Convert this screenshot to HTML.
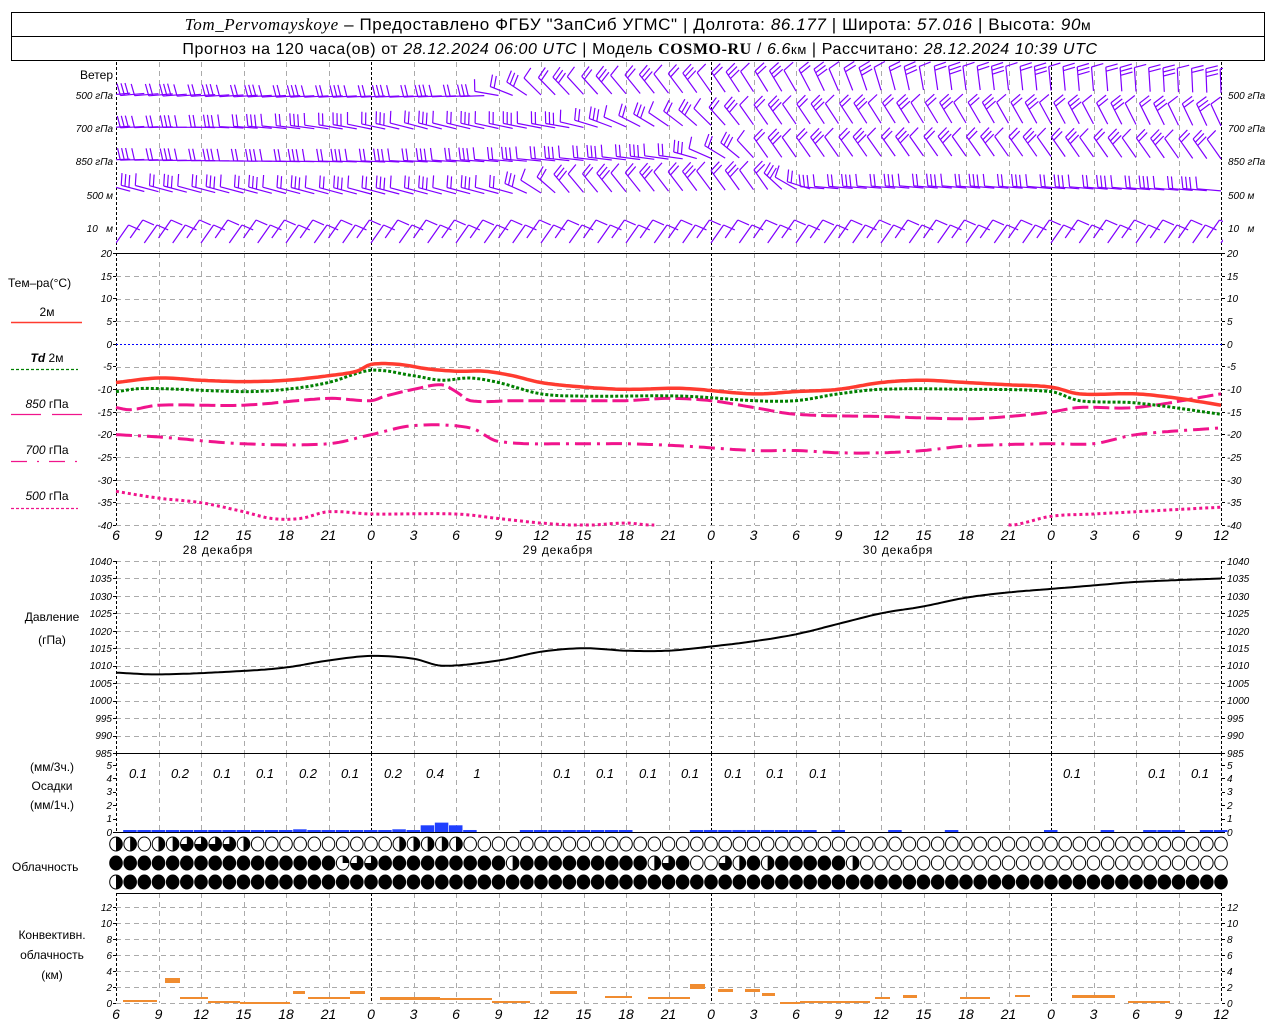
<!DOCTYPE html>
<html><head><meta charset="utf-8"><style>
html,body{margin:0;padding:0;background:#fff;}
svg{display:block;font-family:"Liberation Sans",sans-serif;}
.n{font-family:"Liberation Sans",sans-serif;font-style:italic;font-size:10px;fill:#000}
.t{font-family:"Liberation Sans",sans-serif;font-size:12px;fill:#000}
.h{font-family:"Liberation Sans",sans-serif;font-style:italic;font-size:14px;fill:#000}
.p{font-family:"Liberation Sans",sans-serif;font-style:italic;font-size:13px;fill:#000}
</style></head><body>
<svg id="s" width="1280" height="1024" viewBox="0 0 1280 1024" xmlns="http://www.w3.org/2000/svg">
<defs><clipPath id="wc"><rect x="116" y="60" width="1107" height="192"/></clipPath></defs>
<rect width="1280" height="1024" fill="#fff"/>
<g id="grid"></g>
<g id="data"></g>
<!-- header -->
<rect x="11.5" y="12.5" width="1253" height="48" fill="none" stroke="#000"/>
<line x1="11" y1="36.5" x2="1265" y2="36.5" stroke="#000"/>
<text x="638" y="30" text-anchor="middle" font-size="17" font-family="Liberation Sans, sans-serif" letter-spacing="0.6"><tspan font-family="Liberation Serif, serif" font-style="italic">Tom_Pervomayskoye</tspan> – Предоставлено ФГБУ "ЗапСиб УГМС" | Долгота: <tspan font-style="italic">86.177</tspan> | Широта: <tspan font-style="italic">57.016</tspan> | Высота: <tspan font-style="italic">90</tspan><tspan font-size="14">м</tspan></text>
<text x="640" y="54" text-anchor="middle" font-size="16" font-family="Liberation Sans, sans-serif" letter-spacing="0.6">Прогноз на 120 часа(ов) от <tspan font-style="italic">28.12.2024 06:00 UTC</tspan> | Модель <tspan font-family="Liberation Serif, serif" font-weight="bold">COSMO-RU</tspan> / <tspan font-style="italic">6.6</tspan><tspan font-size="13">км</tspan> | Рассчитано: <tspan font-style="italic">28.12.2024 10:39 UTC</tspan></text>

<!-- wind labels -->
<text class="t" x="113" y="79" text-anchor="end">Ветер</text>
<text class="n" x="113" y="99" text-anchor="end">500 гПа</text>
<text class="n" x="113" y="132" text-anchor="end">700 гПа</text>
<text class="n" x="113" y="165" text-anchor="end">850 гПа</text>
<text class="n" x="113" y="199" text-anchor="end">500 м</text>
<text class="n" x="113" y="232" text-anchor="end">10&#160;&#160;&#160;м</text>
<text class="n" x="1228" y="99">500 гПа</text>
<text class="n" x="1228" y="132">700 гПа</text>
<text class="n" x="1228" y="165">850 гПа</text>
<text class="n" x="1228" y="199">500 м</text>
<text class="n" x="1228" y="232">10&#160;&#160;&#160;м</text>

<!-- temp labels -->
<text class="t" x="8" y="287">Тем–ра(°C)</text>
<text class="t" x="47" y="316" text-anchor="middle" font-size="11">2м</text>
<line x1="11" y1="322.5" x2="82" y2="322.5" stroke="#ff3b30" stroke-width="1.5"/>
<text class="t" x="47" y="362" text-anchor="middle" font-size="11"><tspan font-style="italic" font-weight="bold">Td</tspan>  2м</text>
<line x1="11" y1="369.5" x2="78" y2="369.5" stroke="#008000" stroke-width="1.2" stroke-dasharray="3,2"/>
<text class="t" x="47" y="408" text-anchor="middle" font-size="11"><tspan font-style="italic">850</tspan> гПа</text>
<line x1="11" y1="414.5" x2="82" y2="414.5" stroke="#f0148c" stroke-width="1.2" stroke-dasharray="30,11"/>
<text class="t" x="47" y="454" text-anchor="middle" font-size="11"><tspan font-style="italic">700</tspan> гПа</text>
<line x1="11" y1="461.5" x2="78" y2="461.5" stroke="#f0148c" stroke-width="1.2" stroke-dasharray="16,10,2,10"/>
<text class="t" x="47" y="500" text-anchor="middle" font-size="11"><tspan font-style="italic">500</tspan> гПа</text>
<line x1="11" y1="508.5" x2="78" y2="508.5" stroke="#f0148c" stroke-width="1.2" stroke-dasharray="3,2"/>

<text class="t" x="52" y="621" text-anchor="middle">Давление</text>
<text class="t" x="52" y="644" text-anchor="middle">(гПа)</text>
<text class="t" x="52" y="771" text-anchor="middle">(мм/3ч.)</text>
<text class="t" x="52" y="790" text-anchor="middle">Осадки</text>
<text class="t" x="52" y="809" text-anchor="middle">(мм/1ч.)</text>
<text class="t" x="12" y="871">Облачность</text>
<text class="t" x="52" y="939" text-anchor="middle">Конвективн.</text>
<text class="t" x="52" y="959" text-anchor="middle">облачность</text>
<text class="t" x="52" y="979" text-anchor="middle">(км)</text>

<g class="n" text-anchor="end">
<text x="112" y="257">20</text><text x="112" y="280">15</text><text x="112" y="302">10</text><text x="112" y="325">5</text><text x="112" y="348">0</text><text x="112" y="370">-5</text><text x="112" y="393">-10</text><text x="112" y="416">-15</text><text x="112" y="438">-20</text><text x="112" y="461">-25</text><text x="112" y="484">-30</text><text x="112" y="506">-35</text><text x="112" y="529">-40</text>
<text x="112" y="565">1040</text><text x="112" y="582">1035</text><text x="112" y="600">1030</text><text x="112" y="617">1025</text><text x="112" y="635">1020</text><text x="112" y="652">1015</text><text x="112" y="669">1010</text><text x="112" y="687">1005</text><text x="112" y="704">1000</text><text x="112" y="722">995</text><text x="112" y="739">990</text><text x="112" y="757">985</text>
<text x="112" y="769">5</text><text x="112" y="782">4</text><text x="112" y="795">3</text><text x="112" y="809">2</text><text x="112" y="822">1</text><text x="112" y="836">0</text>
<text x="112" y="911">12</text><text x="112" y="927">10</text><text x="112" y="943">8</text><text x="112" y="959">6</text><text x="112" y="975">4</text><text x="112" y="991">2</text><text x="112" y="1007">0</text>
</g>
<g class="n">
<text x="1227" y="257">20</text><text x="1227" y="280">15</text><text x="1227" y="302">10</text><text x="1227" y="325">5</text><text x="1227" y="348">0</text><text x="1227" y="370">-5</text><text x="1227" y="393">-10</text><text x="1227" y="416">-15</text><text x="1227" y="438">-20</text><text x="1227" y="461">-25</text><text x="1227" y="484">-30</text><text x="1227" y="506">-35</text><text x="1227" y="529">-40</text>
<text x="1227" y="565">1040</text><text x="1227" y="582">1035</text><text x="1227" y="600">1030</text><text x="1227" y="617">1025</text><text x="1227" y="635">1020</text><text x="1227" y="652">1015</text><text x="1227" y="669">1010</text><text x="1227" y="687">1005</text><text x="1227" y="704">1000</text><text x="1227" y="722">995</text><text x="1227" y="739">990</text><text x="1227" y="757">985</text>
<text x="1227" y="769">5</text><text x="1227" y="782">4</text><text x="1227" y="795">3</text><text x="1227" y="809">2</text><text x="1227" y="822">1</text><text x="1227" y="836">0</text>
<text x="1227" y="911">12</text><text x="1227" y="927">10</text><text x="1227" y="943">8</text><text x="1227" y="959">6</text><text x="1227" y="975">4</text><text x="1227" y="991">2</text><text x="1227" y="1007">0</text>
</g>

<g class="h" text-anchor="middle">
<text x="116" y="540">6</text><text x="158.5" y="540">9</text><text x="201" y="540">12</text><text x="243.5" y="540">15</text><text x="286" y="540">18</text><text x="328.5" y="540">21</text><text x="371" y="540">0</text><text x="413.5" y="540">3</text><text x="456" y="540">6</text><text x="498.5" y="540">9</text><text x="541" y="540">12</text><text x="583.5" y="540">15</text><text x="626" y="540">18</text><text x="668.5" y="540">21</text><text x="711" y="540">0</text><text x="753.5" y="540">3</text><text x="796" y="540">6</text><text x="838.5" y="540">9</text><text x="881" y="540">12</text><text x="923.5" y="540">15</text><text x="966" y="540">18</text><text x="1008.5" y="540">21</text><text x="1051" y="540">0</text><text x="1093.5" y="540">3</text><text x="1136" y="540">6</text><text x="1178.5" y="540">9</text><text x="1221" y="540">12</text>
<text x="116" y="1019">6</text><text x="158.5" y="1019">9</text><text x="201" y="1019">12</text><text x="243.5" y="1019">15</text><text x="286" y="1019">18</text><text x="328.5" y="1019">21</text><text x="371" y="1019">0</text><text x="413.5" y="1019">3</text><text x="456" y="1019">6</text><text x="498.5" y="1019">9</text><text x="541" y="1019">12</text><text x="583.5" y="1019">15</text><text x="626" y="1019">18</text><text x="668.5" y="1019">21</text><text x="711" y="1019">0</text><text x="753.5" y="1019">3</text><text x="796" y="1019">6</text><text x="838.5" y="1019">9</text><text x="881" y="1019">12</text><text x="923.5" y="1019">15</text><text x="966" y="1019">18</text><text x="1008.5" y="1019">21</text><text x="1051" y="1019">0</text><text x="1093.5" y="1019">3</text><text x="1136" y="1019">6</text><text x="1178.5" y="1019">9</text><text x="1221" y="1019">12</text>
</g>
<g class="t" text-anchor="middle" letter-spacing="0.8">
<text x="218" y="554">28 декабря</text><text x="558" y="554">29 декабря</text><text x="898" y="554">30 декабря</text>
</g>
<g class="p" text-anchor="middle">
<text x="138" y="778">0.1</text><text x="180" y="778">0.2</text><text x="222" y="778">0.1</text><text x="265" y="778">0.1</text><text x="308" y="778">0.2</text><text x="350" y="778">0.1</text><text x="393" y="778">0.2</text><text x="435" y="778">0.4</text><text x="477" y="778">1</text>
<text x="562" y="778">0.1</text><text x="605" y="778">0.1</text><text x="648" y="778">0.1</text><text x="690" y="778">0.1</text><text x="733" y="778">0.1</text><text x="775" y="778">0.1</text><text x="818" y="778">0.1</text>
<text x="1072" y="778">0.1</text><text x="1157" y="778">0.1</text><text x="1200" y="778">0.1</text>
</g>
</svg>
<script>
(function(){
var NS="http://www.w3.org/2000/svg";
var G=document.getElementById('grid'),D=document.getElementById('data');
function el(p,n,a){var e=document.createElementNS(NS,n);for(var k in a)e.setAttribute(k,a[k]);p.appendChild(e);return e;}
function X(h){return 116+h*14.1667;}
function ip(k,h){if(h<=k[0][0])return k[0][1];var n=k.length;for(var i=1;i<n;i++){if(h<=k[i][0]){var a=k[i-1],b=k[i],t=(h-a[0])/(b[0]-a[0]);
 var p0=i>1?k[i-2]:a,p3=i<n-1?k[i+1]:b;
 var m1=(b[1]-p0[1])/((b[0]-p0[0])||1)*(b[0]-a[0]),m2=(p3[1]-a[1])/((p3[0]-a[0])||1)*(b[0]-a[0]);
 var t2=t*t,t3=t2*t;return (2*t3-3*t2+1)*a[1]+(t3-2*t2+t)*m1+(-2*t3+3*t2)*b[1]+(t3-t2)*m2;}}return k[n-1][1];}
function ipl(k,h){if(h<=k[0][0])return k[0][1];for(var i=1;i<k.length;i++){if(h<=k[i][0]){var a=k[i-1],b=k[i],t=(h-a[0])/(b[0]-a[0]);return a[1]+(b[1]-a[1])*t;}}return k[k.length-1][1];}
function hl(y,x1,x2,st){el(G,'line',{x1:x1,x2:x2,y1:y+.5,y2:y+.5,stroke:st||'#aaa','stroke-dasharray':st?'':'5,4'});}
for(var v=15;v>=-40;v-=5){var y=Math.round(344-v*4.533);if(v!=0)hl(y,116,1222);}
for(var p=1040;p>985;p-=5){hl(Math.round(561+(1040-p)*3.49),116,1222);}
for(var c=2;c<=12;c+=2){hl(1003-c*8,116,1222);}
hl(1003,116,1222);
function vseg(x,y1,y2,day){el(G,'line',{x1:x+.5,x2:x+.5,y1:y1,y2:y2,stroke:day?'#000':'#aaa','stroke-dasharray':day?'3,2':'5,4'});}
for(var h=0;h<=78;h+=3){var x=Math.round(X(h)),day=(h==18||h==42||h==66||h==0||h==78);
 vseg(x,62,252,day);vseg(x,253,525,day);vseg(x,561,753,day);vseg(x,753,832,day);vseg(x,893,1003,day);}
[[253],[753],[832],[893]].forEach(function(a){el(G,'line',{x1:116,x2:1222,y1:a[0]+.5,y2:a[0]+.5,stroke:'#000'});});
el(G,'line',{x1:116,x2:1222,y1:344.5,y2:344.5,stroke:'#0000ff','stroke-dasharray':'2,2'});
[[253,525,13],[561,753,12],[765,832,6],[907,1003,7]].forEach(function(r){var n=r[2];for(var i=0;i<n;i++){var y=Math.round(r[0]+(r[1]-r[0])*i/(n-1))+.5;el(G,'line',{x1:113,x2:116,y1:y,y2:y,stroke:'#000'});el(G,'line',{x1:1222,x2:1225,y1:y,y2:y,stroke:'#000'});}});
function curve(k,f,st,w,da,h0,h1){var d='';h0=h0||0;h1=(h1===undefined)?78:h1;for(var h=h0;h<=h1+1e-6;h+=0.25){d+=(d?'L':'M')+X(h).toFixed(1)+','+f(ip(k,h)).toFixed(1);}el(D,'path',{d:d,fill:'none',stroke:st,'stroke-width':w,'stroke-dasharray':da||''});}
function T(v){return Math.min(525,344-v*4.533);}
var t2=[[0,-8.5],[3,-7.5],[6,-8],[9,-8.3],[12,-8],[15,-7],[17,-6],[18,-4.5],[20,-4.5],[22,-5.5],[24,-6],[26,-6],[28,-7],[30,-8.5],[33,-9.5],[36,-10],[40,-9.8],[45,-11],[48,-10.5],[51,-10],[54,-8.5],[57,-8],[60,-8.5],[63,-9],[66,-9.5],[68,-11],[72,-11],[75,-12],[78,-13.5]];
var td=[[0,-10.5],[2,-9.8],[9,-10.5],[12,-10],[15,-8.5],[18,-5.8],[21,-7],[23,-8],[25,-7.5],[27,-8.5],[30,-11],[33,-11.5],[40,-11.5],[45,-12.5],[48,-12.5],[51,-11],[54,-10],[60,-10],[66,-10.5],[68,-12.5],[72,-13],[78,-15.5]];
var p850=[[0,-14],[1,-14.5],[3,-13.5],[9,-13.5],[15,-12],[18,-12.5],[19,-11.5],[21,-10],[23,-9],[24,-10.5],[25,-12.5],[28,-12.5],[33,-12.5],[36,-12.5],[39,-12],[42,-12.5],[45,-14],[48,-15.5],[54,-16],[60,-16.5],[63,-16],[66,-15],[68,-14],[72,-14],[78,-11]];
var p700=[[0,-20],[3,-20.5],[9,-22],[15,-22],[18,-20],[21,-18],[25,-18.5],[27,-21.5],[33,-22],[36,-22],[40,-22.5],[45,-23.5],[48,-23.5],[51,-24],[54,-24],[57,-23.5],[60,-22.5],[66,-22],[69,-22],[72,-20],[78,-18.5]];
var p500=[[0,-32.5],[3,-34],[6,-35],[9,-37],[11,-38.5],[13,-38.5],[15,-37],[18,-37.5],[24,-37.5],[27,-38.5],[30,-39.5],[33,-40],[36,-39.5],[38,-40],[63,-40],[66,-38],[69,-37.5],[72,-37],[78,-36]];
curve(p500,T,'#f0148c',3,'3,3',0,38);curve(p500,T,'#f0148c',3,'3,3',63,78);
curve(p700,T,'#f0148c',3,'16,6,3,6');
curve(p850,T,'#f0148c',3,'16,5');
curve(td,T,'#008000',3,'3,2');
curve(t2,T,'#ff3b30',3.5);
var pr=[[0,1008],[3,1007.5],[9,1008.5],[12,1009.5],[15,1011.5],[18,1012.8],[21,1012],[23,1010],[27,1011.5],[30,1014],[33,1015],[36,1014.3],[39,1014.3],[42,1015.5],[45,1017],[48,1019],[51,1022],[54,1025],[57,1027],[60,1029.5],[63,1031],[66,1032],[69,1033],[72,1034],[78,1035]];
curve(pr,function(p){return 561+(1040-p)*3.49;},'#000',2);
var pp={1:.1,2:.1,3:.1,4:.1,5:.1,6:.1,7:.05,8:.1,9:.05,10:.1,11:.1,12:.1,13:.2,14:.1,15:.1,16:.1,17:.05,18:.1,19:.1,20:.2,21:.1,22:.5,23:.7,24:.5,25:.15,29:.05,30:.05,31:.05,32:.1,33:.05,34:.1,35:.05,36:.05,41:.1,42:.15,43:.1,44:.15,45:.15,46:.15,47:.1,48:.05,49:.05,51:.1,55:.05,59:.05,66:.1,70:.1,75:.1,77:.1,78:.1,73:.1,74:.1};
for(var k in pp){var h=+k,v=pp[k],hh=Math.max(2,v*13.4);el(D,'rect',{x:X(h)-7,y:832-hh,width:13.5,height:hh,fill:'#1f3fff'});}
function cloud(cx,cy,f){el(D,'ellipse',{cx:cx,cy:cy,rx:6.3,ry:7,fill:f>=1?'#000':'#fff',stroke:'#000','stroke-width':1});
 if(f>0&&f<1){var a=f*2*Math.PI,x2=cx+6.3*Math.sin(a),y2=cy-7*Math.cos(a);el(D,'path',{d:'M'+cx+','+cy+'L'+cx+','+(cy-7)+'A6.3,7 0 '+(f>0.5?1:0)+',1 '+x2.toFixed(2)+','+y2.toFixed(2)+'Z',fill:'#000'});}}
var top={0:.5,1:.5,3:.5,4:.5,5:.75,6:.75,7:.75,8:.75,9:.5,20:.5,21:.5,22:.5,23:.5,24:.5};
var mid={16:.25,17:.75,18:.75,28:.5,38:.5,39:.75,41:0,42:0,43:.75,44:.5,46:.5,52:.5};
for(var h=0;h<=78;h++){var x=X(h);cloud(x,844,top[h]||0);
 var m=h<=52?1:0;if(mid[h]!==undefined)m=mid[h];cloud(x,863,m);cloud(x,882,h==0?.5:1);}
var cv=[[123,157,1000,2],[165,180,978,5],[180,208,997,2],[208,240,1001,2],[240,290,1002,2],[293,305,991,3],[308,350,997,2],[350,365,991,3],[380,440,997,3],[440,492,998,2],[492,530,1001,2],[550,577,991,3],[605,632,996,2],[648,690,997,2],[690,705,984,5],[718,733,989,3],[745,760,989,3],[762,775,993,3],[780,800,1002,2],[800,870,1001,2],[875,890,997,2],[903,917,995,3],[960,990,997,2],[1015,1030,995,2],[1072,1115,995,3],[1128,1170,1001,2]];
cv.forEach(function(b){el(D,'rect',{x:b[0],y:b[2],width:b[1]-b[0],height:b[3],fill:'#f08c30'});});
var levels=[
 {y:93,len:24,k:[[0,175],[26,178],[30,225],[48,240],[58,262],[78,268]]},
 {y:126,len:24,k:[[0,175],[22,195],[32,190],[45,235],[78,245]]},
 {y:159,len:24,k:[[0,178],[40,188],[46,235],[78,235]]},
 {y:191,len:24,k:[[0,195],[28,195],[32,230],[46,235],[50,185],[78,185]]},
 {y:240,len:22,k:[[0,305],[78,305]]}];
var W=document.createElementNS(NS,'g');W.setAttribute('stroke','#8000ff');W.setAttribute('stroke-width','1.2');W.setAttribute('fill','none');W.setAttribute('clip-path','url(#wc)');D.appendChild(W);
levels.forEach(function(L,li){for(var h=0;h<=78;h++){var x=X(h),a=ipl(L.k,h)*Math.PI/180;
 var yb=L.y+(li<4?Math.sin(h*0.08)*3:(h%2?-2:3));
 var dx=Math.cos(a),dy=Math.sin(a),tx=x+dx*L.len,ty=yb+dy*L.len;
 var px=-dy,py=dx;
 var d='M'+x.toFixed(1)+','+yb.toFixed(1)+'L'+tx.toFixed(1)+','+ty.toFixed(1);
 var nb=li==4?1:((h%3)+1);
 for(var i=0;i<nb;i++){var bx=tx-dx*i*4,by=ty-dy*i*4;d+='M'+bx.toFixed(1)+','+by.toFixed(1)+'l'+((px+dx*0.2)*12).toFixed(1)+','+((py+dy*0.2)*12).toFixed(1);}
 el(W,'path',{d:d});}});
})();
</script>
</body></html>
